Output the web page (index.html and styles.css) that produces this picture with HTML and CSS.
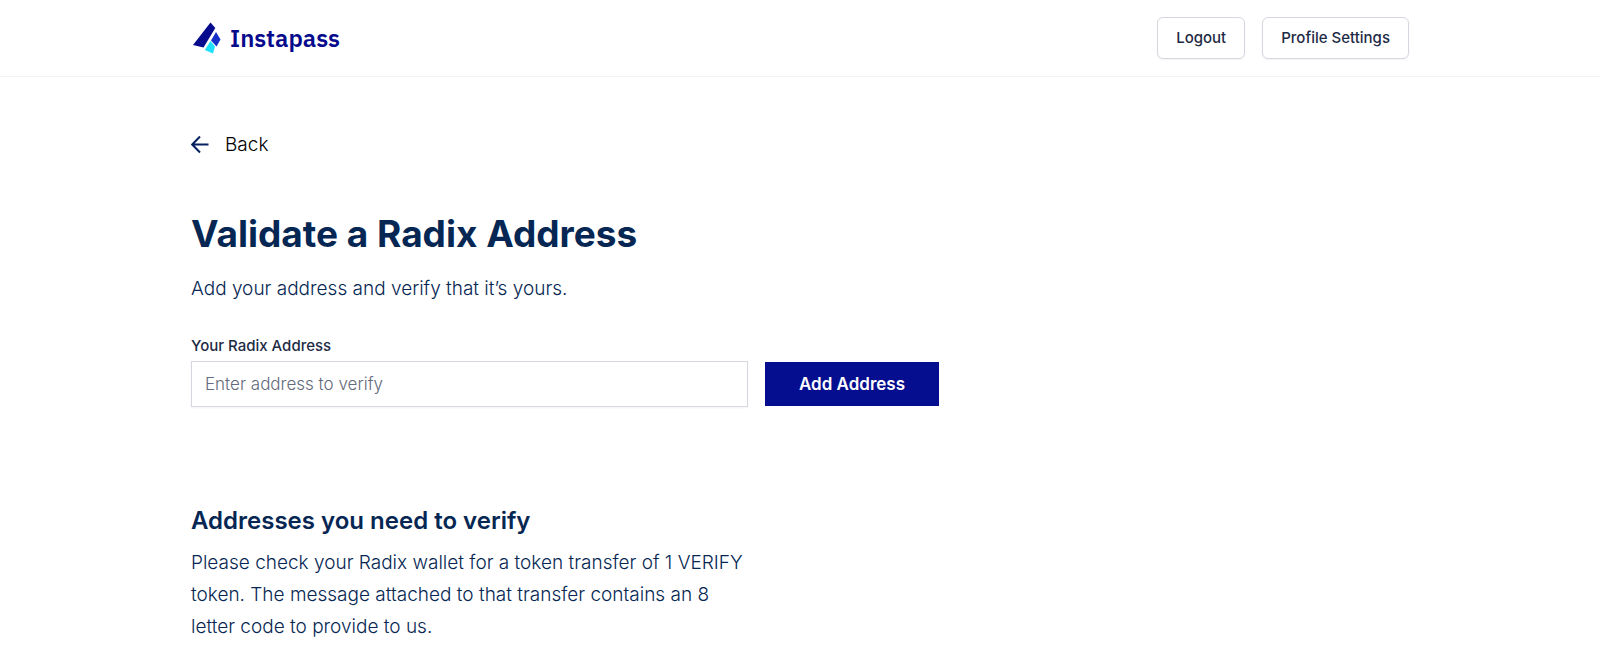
FILE: index.html
```html
<!DOCTYPE html>
<html lang="en">
<head>
<meta charset="utf-8">
<meta name="viewport" content="width=device-width, initial-scale=1">
<title>Instapass – Validate a Radix Address</title>
<link rel="stylesheet" href="styles.css">
</head>
<body>
<header class="site-header">
  <div class="container header-row">
    <a class="brand" href="#">
      <svg class="brand-mark" viewBox="0 0 28 32" aria-hidden="true">
        <path fill="#060a8c" d="M17.500 0.500L22.300 6L10.500 25.500L0 23Z"/>
        <path fill="#1530c8" d="M23 10L27.500 17.500L23.500 24.500L18 18.500Z"/>
        <path fill="#1fe0ff" d="M17.500 19L22 24.500L20 31.500L11.800 28Z"/>
      </svg>
      <span class="brand-name">Instapass</span>
    </a>
    <nav class="header-actions">
      <button class="btn-outline" type="button">Logout</button>
      <button class="btn-outline" type="button">Profile Settings</button>
    </nav>
  </div>
</header>
<main class="container page">
  <a class="back-link" href="#">
    <svg class="back-icon" viewBox="0 0 18 18" aria-hidden="true"><path d="M17.500 8.500H1.500M9 0.500L1.200 8.500L9 16.500"/></svg>
    <span>Back</span>
  </a>
  <h1 class="title">Validate a Radix Address</h1>
  <p class="lead">Add your address and verify that it’s yours.</p>
  <form class="address-form">
    <label class="field-label" for="address">Your Radix Address</label>
    <div class="field-row">
      <input class="field-input" id="address" type="text" placeholder="Enter address to verify">
      <button class="btn-primary" type="button">Add Address</button>
    </div>
  </form>
  <section class="pending">
    <h2 class="subtitle">Addresses you need to verify</h2>
    <p class="pending-text">Please check your Radix wallet for a token transfer of 1 VERIFY token. The message attached to that transfer contains an 8 letter code to provide to us.</p>
  </section>
</main>
</body>
</html>
```
FILE: styles.css
```css
*, *::before, *::after { box-sizing: border-box; }

body {
  margin: 0;
  background: #fff;
  color: #062753;
  font-family: Inter, "Liberation Sans", sans-serif;
  font-size: 19px;
  font-weight: 300;
  line-height: 32px;
}

h1, h2, p { margin: 0; }

.container {
  width: calc(100% - 48px);
  max-width: 1218px;
  margin: 0 auto;
}

.site-header { border-bottom: 1px solid #f3f3f5; }

.header-row {
  display: flex;
  align-items: center;
  justify-content: space-between;
  padding: 17px 0;
}

.brand {
  display: flex;
  align-items: center;
  gap: 9px;
  padding-left: 2px;
  color: #060a8c;
  text-decoration: none;
}

.brand-mark { width: 28px; height: 32px; }

.brand-name {
  font-family: "IBM Plex Sans", "Noto Sans", sans-serif;
  font-size: 24px;
  font-weight: 600;
}

.header-actions { display: flex; gap: 17px; }

.btn-outline {
  height: 42px;
  padding: 0 18px;
  border: 1px solid #d6d8e0;
  border-radius: 6px;
  background: #fff;
  box-shadow: 0 1px 2px rgba(0, 0, 0, 0.05);
  color: #1e2b45;
  font: 500 15px/20px Inter, sans-serif;
}

.page { padding: 52px 0 0; }

.back-link {
  display: inline-flex;
  align-items: center;
  gap: 16px;
  color: #000;
  text-decoration: none;
}

.back-icon {
  width: 18px;
  height: 18px;
  fill: none;
  stroke: #062060;
  stroke-width: 2;
}

.title {
  margin-top: 46px;
  font-size: 37px;
  font-weight: 700;
  line-height: 48px;
}

.lead { margin-top: 15px; }

.address-form { margin-top: 31px; }

.field-label {
  display: block;
  color: #1e2b45;
  font-size: 15px;
  font-weight: 500;
  line-height: 20px;
}

.field-row {
  display: flex;
  align-items: center;
  gap: 17px;
  margin-top: 5px;
}

.field-input {
  flex: 0 1 557px;
  min-width: 0;
  height: 46px;
  padding: 0 13px;
  border: 1px solid #d6d8e0;
  border-radius: 0;
  background: #fff;
  box-shadow: 0 1px 2px rgba(0, 0, 0, 0.05);
  color: #062753;
  font: 300 17px/24px Inter, sans-serif;
}

.field-input::placeholder { color: #636a7b; opacity: 1; }

.btn-primary {
  height: 44px;
  padding: 0 34px;
  border: 0;
  background: #040e8e;
  color: #fff;
  font: 600 17px/24px Inter, sans-serif;
  white-space: nowrap;
}

.pending {
  max-width: 557px;
  margin-top: 96px;
  padding-bottom: 12px;
}

.subtitle {
  font-size: 24px;
  font-weight: 600;
  line-height: 36px;
}

.pending-text { margin-top: 8px; }
```
